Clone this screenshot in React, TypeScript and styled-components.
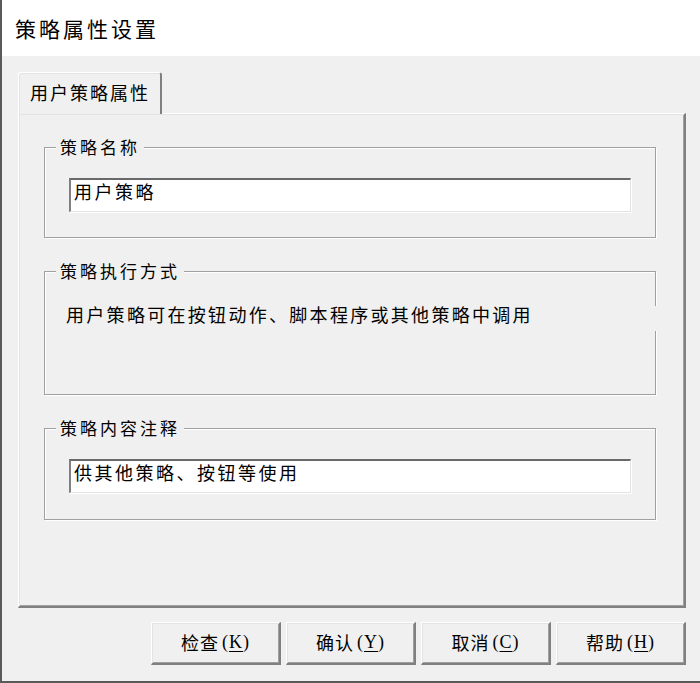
import styled, { createGlobalStyle } from 'styled-components';

const GlobalStyle = createGlobalStyle`
  html, body { margin: 0; padding: 0; background: #f0f0f0; }
  body {
    font-family: "Noto Sans CJK SC", "Noto Sans", sans-serif;
    color: #000;
  }
`;

const Window = styled.div`
  width: 700px;
  height: 683px;
  box-sizing: border-box;
  border-left: 2px solid #5a5a5a;
  border-bottom: 2px solid #5a5a5a;
  background: #f0f0f0;
  display: flex;
  flex-direction: column;
  overflow: hidden;
`;

const TitleBar = styled.div`
  height: 56px;
  flex: none;
  background: #fff;
  display: flex;
  align-items: center;
  padding-left: 13px;
  font-size: 21px;
  letter-spacing: 3px;
`;

const Body = styled.div`
  flex: 1;
  display: flex;
  flex-direction: column;
  padding: 16px 14px 0 16px;
`;

const TabRow = styled.div`
  display: flex;
  height: 41px;
  flex: none;
`;

const Tab = styled.div`
  width: 144px;
  box-sizing: border-box;
  border-top: 1px solid #fff;
  border-left: 1px solid #fff;
  border-right: 2px solid #808080;
  border-radius: 3px 3px 0 0;
  box-shadow: inset 1px 1px 0 #e3e3e3;
  display: flex;
  align-items: center;
  padding: 0 0 4px 11px;
  font-size: 18px;
  letter-spacing: 2px;
  margin-bottom: -1px;
  background: #f0f0f0;
  position: relative;
  z-index: 1;
`;

const Panel = styled.div`
  height: 495px;
  box-sizing: border-box;
  border-top: 1px solid #fff;
  border-left: 1px solid #fff;
  border-right: 2px solid #808080;
  border-bottom: 2px solid #808080;
  box-shadow: inset 1px 1px 0 #e3e3e3, inset -1px -1px 0 #a0a0a0;
  padding: 33px 28px 0 25px;
  display: flex;
  flex-direction: column;
`;

const GroupBox = styled.div<{ $height: number; $gap?: boolean }>`
  position: relative;
  height: ${p => p.$height}px;
  box-sizing: border-box;
  border: 1px solid #a0a0a0;
  box-shadow: inset 1px 1px 0 #fff, 1px 1px 0 #fff;
  padding: 0 24px;
  margin-bottom: 33px;

  ${p => p.$gap && `
    &::after {
      content: '';
      position: absolute;
      right: -2px;
      top: 34px;
      width: 4px;
      height: 25px;
      background: #f0f0f0;
    }
  `}
`;

const Legend = styled.div`
  display: block;
  width: fit-content;
  margin: -12px 0 0 -13px;
  padding: 0 4px 0 4px;
  background: #f0f0f0;
  font-size: 17px;
  line-height: 22px;
  letter-spacing: 3px;
`;

const TextBox = styled.div`
  margin-top: 20px;
  height: 34px;
  box-sizing: border-box;
  background: #fff;
  border-top: 2px solid #696969;
  border-left: 2px solid #808080;
  border-right: 1px solid #e3e3e3;
  border-bottom: 1px solid #e3e3e3;
  box-shadow: 1px 1px 0 #fff;
  display: flex;
  align-items: center;
  padding: 0 0 9px 3px;
  font-size: 18px;
  letter-spacing: 2.5px;
`;

const Description = styled.div`
  margin: 19px 0 0 -3px;
  font-size: 18px;
  line-height: 26px;
  letter-spacing: 2.3px;
`;

const ButtonRow = styled.div`
  display: flex;
  justify-content: flex-end;
  gap: 5px;
  padding-top: 14px;
`;

const Button = styled.button`
  width: 130px;
  height: 43px;
  box-sizing: border-box;
  background: #f0f0f0;
  border-top: 1px solid #fff;
  border-left: 1px solid #fff;
  border-right: 2px solid #808080;
  border-bottom: 2px solid #808080;
  box-shadow: inset 1px 1px 0 #e3e3e3, inset -1px -1px 0 #a0a0a0;
  font-family: "Noto Sans CJK SC", "Noto Sans", sans-serif;
  font-size: 18px;
  letter-spacing: 1px;
  color: #000;
  padding: 0 0 2px;
  display: flex;
  align-items: center;
  justify-content: center;
`;

const Mnemonic = styled.span`
  margin-left: 3px;
  font-family: "Liberation Serif", "Noto Sans CJK SC", serif;
  font-size: 18px;
  letter-spacing: 1px;
  u { text-underline-offset: 3px; }
`;

const buttons = [
  { label: '检查', key: 'K' },
  { label: '确认', key: 'Y' },
  { label: '取消', key: 'C' },
  { label: '帮助', key: 'H' },
];

export default function App() {
  return (
    <>
      <GlobalStyle />
      <Window>
        <TitleBar>策略属性设置</TitleBar>
        <Body>
          <TabRow>
            <Tab>用户策略属性</Tab>
          </TabRow>
          <Panel>
            <GroupBox $height={91}>
              <Legend>策略名称</Legend>
              <TextBox>用户策略</TextBox>
            </GroupBox>
            <GroupBox $height={124} $gap>
              <Legend>策略执行方式</Legend>
              <Description>用户策略可在按钮动作、脚本程序或其他策略中调用</Description>
            </GroupBox>
            <GroupBox $height={92}>
              <Legend>策略内容注释</Legend>
              <TextBox>供其他策略、按钮等使用</TextBox>
            </GroupBox>
          </Panel>
          <ButtonRow>
            {buttons.map(b => (
              <Button key={b.key}>
                {b.label}
                <Mnemonic>(<u>{b.key}</u>)</Mnemonic>
              </Button>
            ))}
          </ButtonRow>
        </Body>
      </Window>
    </>
  );
}
